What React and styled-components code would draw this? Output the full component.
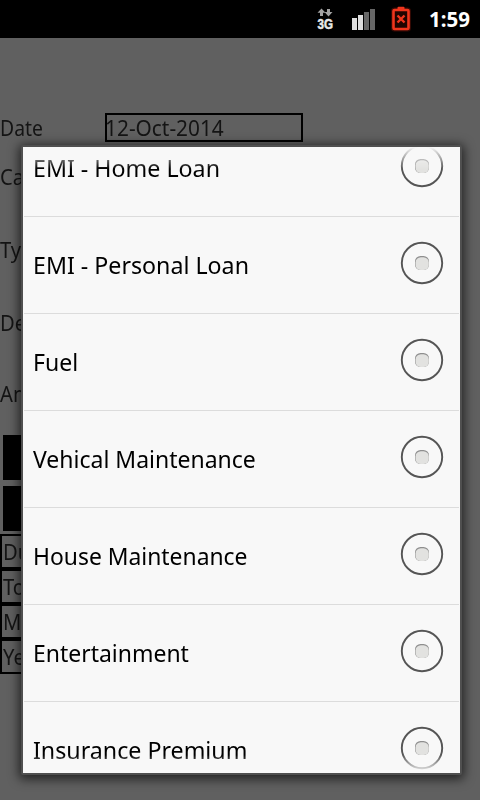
import React from 'react'
import styled, { createGlobalStyle } from 'styled-components'

const GlobalStyle = createGlobalStyle`
  * {
    box-sizing: border-box;
  }
  body {
    margin: 0;
    background: #606060;
    font-family: 'Noto Sans', 'Open Sans', sans-serif;
  }
`

const Screen = styled.div`
  position: relative;
  width: 480px;
  height: 800px;
  overflow: hidden;
  background: #606060;
`

const StatusBar = styled.header`
  display: flex;
  align-items: center;
  justify-content: flex-end;
  height: 38px;
  padding-right: 9px;
  background: #000;
`

const Clock = styled.span`
  width: 42px;
  margin-left: 17px;
  color: #fff;
  font-size: 20.5px;
  font-weight: 700;
  line-height: 38px;
  white-space: nowrap;
`

const Form = styled.div`
  display: flex;
  flex-direction: column;
  padding-top: 75px;
`

const Field = styled.div`
  display: flex;
  align-items: center;
  height: ${(p) => p.$height}px;
`

const Label = styled.label`
  width: 105px;
  padding-bottom: 2px;
  color: #141414;
  font-size: 22px;
  line-height: 30px;
  white-space: nowrap;
`

const Squeeze = styled.span`
  display: inline-block;
  transform: scaleX(${(p) => p.$x});
  transform-origin: left;
`

const DateInput = styled.div`
  width: 198px;
  height: 29px;
  border: 2px solid #000;
  color: #141414;
  font-size: 22px;
  line-height: 24px;
  text-indent: -1px;
`

const Panel = styled.div`
  width: 303px;
`

const Buttons = styled.div`
  display: grid;
  gap: 6px;
  padding: 3px;
`

const Button = styled.div`
  height: 45px;
  background: #000;
`

const Cell = styled.div`
  height: 35px;
  padding-left: 1px;
  border: 2px solid #000;
  color: #141414;
  font-size: 22px;
  line-height: 30px;
`

const Dialog = styled.div`
  position: absolute;
  top: 145px;
  left: 21px;
  width: 441px;
  height: 630px;
  border: 2px solid #505050;
  border-radius: 2px;
  background: #f8f8f8;
  box-shadow: 0 2px 11px 2px rgba(0, 0, 0, 0.65);
`

const ListView = styled.div`
  height: 626px;
  padding: 0 1px;
  overflow: hidden;
  mask-image: linear-gradient(transparent, #000 22px, #000 608px, transparent);
`

const List = styled.ul`
  margin: -27px 0 0;
  padding: 0;
  list-style: none;
`

const Option = styled.li`
  display: flex;
  align-items: center;
  justify-content: space-between;
  height: 97px;
  padding: 0 15px 0 9px;
  border-bottom: 1px solid #dcdcdc;
`

const OptionText = styled.span`
  padding-bottom: 1px;
  color: #000;
  font-size: 24px;
  white-space: nowrap;
  transform: scaleX(${(p) => p.$x});
  transform-origin: left;
`

const RadioIcon = styled.svg`
  flex: none;
  margin-bottom: 4px;
`

const options = [
  ['EMI - Home Loan', 0.967],
  ['EMI - Personal Loan', 0.966],
  ['Fuel', 0.96],
  ['Vehical Maintenance', 0.958],
  ['House Maintenance', 0.953],
  ['Entertainment', 0.957],
  ['Insurance Premium', 0.967],
]

const Radio = () => (
  <RadioIcon width="44" height="44" viewBox="0 0 44 44">
    <circle cx="22" cy="22" r="20.2" fill="none" stroke="#555" strokeWidth="1.9" />
    <rect x="15" y="15" width="14" height="14" rx="5.5" fill="#8e8e8e" />
    <rect x="15.5" y="16.2" width="13.3" height="12.8" rx="5.3" fill="#e2e2e0" />
  </RadioIcon>
)

const StatusIcons = () => (
  <svg width="98" height="38" viewBox="314 0 98 38">
    <g fill="#a2a2a2">
      <path d="M321.500 8.500l4 4.300h-2.500V16h-3v-3.200H317.500z" />
      <path d="M327 9h3v3h2.500l-4 4.500-4-4.500h2.500z" />
    </g>
    <text
      x="317.5"
      y="29"
      fill="#e8e8e8"
      stroke="#e8e8e8"
      strokeWidth="0.5"
      fontSize="14.5"
      fontWeight="700"
      fontFamily="Liberation Sans, sans-serif"
      textLength="15.5"
      lengthAdjust="spacingAndGlyphs"
    >
      3G
    </text>
    <path d="M352 18h5v12h-5zM358 15h5v15h-5z" fill="#dedede" />
    <path d="M364 12h5v18h-5zM370 9h5v21h-5z" fill="#666" />
    <rect x="393.500" y="10" width="15" height="19" rx="1" fill="none" stroke="#4a0d05" strokeWidth="5" opacity="0.7" />
    <rect x="397.500" y="6.800" width="7" height="3" rx="1" fill="#ef351c" />
    <rect x="393.500" y="10" width="15" height="19" rx="1" fill="#210400" stroke="#ef351c" strokeWidth="2.6" />
    <path d="M397.500 15.500l7 7M404.500 15.500l-7 7" stroke="#ef351c" strokeWidth="2.4" />
  </svg>
)

const App = () => {
  return (
    <Screen>
      <GlobalStyle />
      <StatusBar>
        <StatusIcons />
        <Clock>1:59</Clock>
      </StatusBar>
      <Form>
        <Field $height={29}>
          <Label>
            <Squeeze $x={0.88}>Date</Squeeze>
          </Label>
          <DateInput>
            <Squeeze $x={0.947}>12-Oct-2014</Squeeze>
          </DateInput>
        </Field>
        <Field $height={69}>
          <Label>
            <Squeeze $x={0.92}>Ca</Squeeze>
          </Label>
        </Field>
        <Field $height={78}>
          <Label>
            <Squeeze $x={0.92}>Ty</Squeeze>
          </Label>
        </Field>
        <Field $height={67}>
          <Label>
            <Squeeze $x={0.92}>De</Squeeze>
          </Label>
        </Field>
        <Field $height={76}>
          <Label>
            <Squeeze $x={0.92}>Am</Squeeze>
          </Label>
        </Field>
        <Panel>
          <Buttons>
            <Button />
            <Button />
          </Buttons>
          {['Du', 'To', 'M', 'Ye'].map((text) => (
            <Cell key={text}>
              <Squeeze $x={0.92}>{text}</Squeeze>
            </Cell>
          ))}
        </Panel>
      </Form>
      <Dialog>
        <ListView>
          <List>
            {options.map(([name, x]) => (
              <Option key={name}>
                <OptionText $x={x}>{name}</OptionText>
                <Radio />
              </Option>
            ))}
          </List>
        </ListView>
      </Dialog>
    </Screen>
  )
}

export default App
